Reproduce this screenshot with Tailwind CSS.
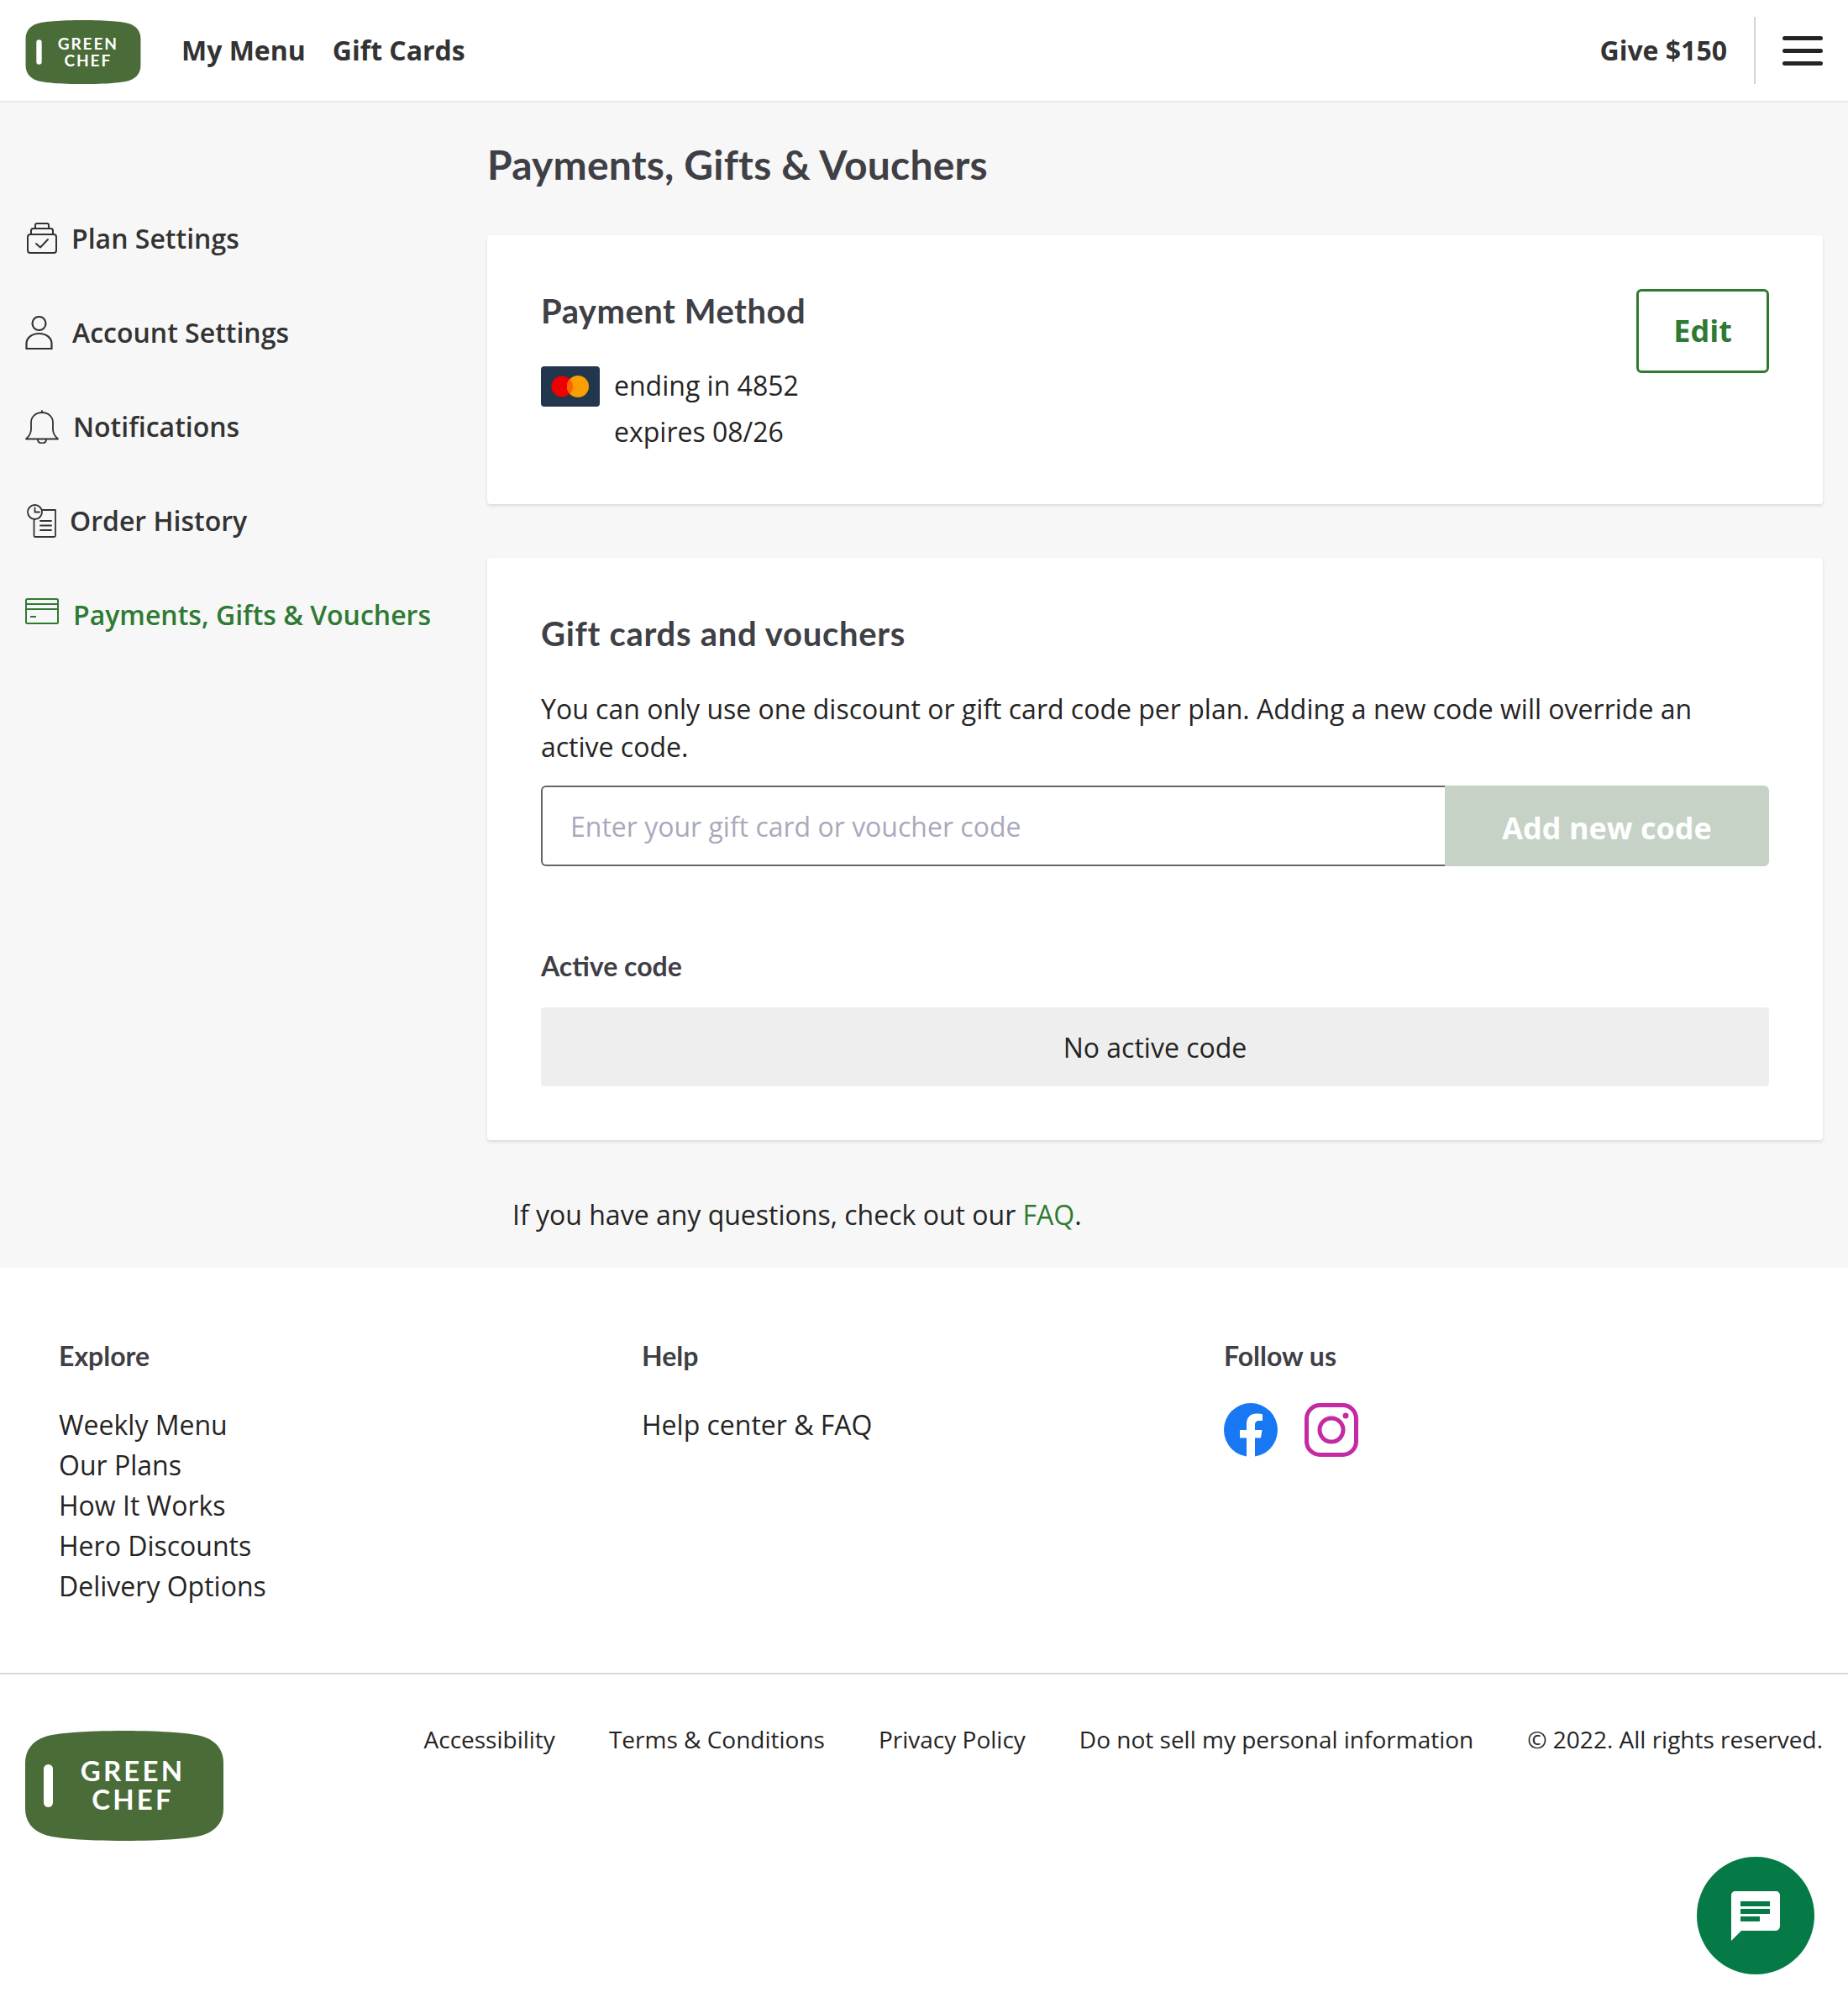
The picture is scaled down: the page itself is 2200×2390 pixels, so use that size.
<!DOCTYPE html>
<html lang="en">
<head>
  <meta charset="UTF-8" />
  <title>Payments, Gifts &amp; Vouchers</title>
  <script src="https://cdn.jsdelivr.net/npm/@tailwindcss/browser@4"></script>
</head>
<body class="bg-white font-['Open_Sans',sans-serif] text-[#242424]">
  <div class="relative w-[2200px] h-[2390px] overflow-hidden">

    <!-- header -->
    <header class="h-[122px] flex items-center border-b-2 border-[#e9e9e9] bg-white pl-[30px] pr-[30px]">
      <svg class="w-[138px] h-[76px] mt-[3px]" viewBox="0 0 236 131">
        <path fill="#4a6c38" d="M118 0C165 0 200 3 212 7C228 12 236 24 236 38V93C236 107 228 119 212 124C200 128 165 131 118 131C71 131 36 128 24 124C8 119 0 107 0 93V38C0 24 8 12 24 7C36 3 71 0 118 0Z"/>
        <rect x="22" y="40" width="11" height="51" rx="5.5" fill="#fff"/>
        <text x="128" y="60" text-anchor="middle" fill="#fff" font-family="Lato" font-weight="700" font-size="33" letter-spacing="3.2">GREEN</text>
        <text x="128" y="94" text-anchor="middle" fill="#fff" font-family="Lato" font-weight="700" font-size="33" letter-spacing="3.2">CHEF</text>
      </svg>
      <nav class="flex gap-[32px] ml-[48px] text-[32px] font-bold text-[#333]">
        <a>My Menu</a>
        <a>Gift Cards</a>
      </nav>
      <a class="ml-auto text-[32px] font-bold text-[#333]">Give $150</a>
      <div class="w-[2px] h-[80px] bg-[#d4d4d4] ml-[32px]"></div>
      <div class="ml-[32px] w-[48px] flex flex-col gap-[10px]">
        <div class="h-[5px] rounded-full bg-[#242424]"></div>
        <div class="h-[5px] rounded-full bg-[#242424]"></div>
        <div class="h-[5px] rounded-full bg-[#242424]"></div>
      </div>
    </header>

    <!-- account area -->
    <div class="flex h-[1387px] bg-[#f7f7f7]">
      <aside class="w-[580px] shrink-0 pl-[30px] pt-[140px] text-[32px] font-semibold text-[#333]">
        <a class="h-[112px] flex items-start gap-[17px]">
          <svg class="w-[36px] h-[37px] ml-[2px] mt-[3px] shrink-0" viewBox="0 0 36 37" fill="none" stroke="#333" stroke-width="2" stroke-linejoin="round" stroke-linecap="round">
            <rect x="1" y="14" width="34" height="22" rx="3"/>
            <path d="M5 14V9.500C5 8 6 7 7.500 7H28.500C30 7 31 8 31 9.500V14"/>
            <path d="M10 7V3C10 2 11 1 12 1H24C25 1 26 2 26 3V7"/>
            <path d="M11 25L16 29.500L25 20"/>
          </svg>
          <span class="leading-[44px]">Plan Settings</span>
        </a>
        <a class="h-[112px] flex items-start gap-[23px]">
          <svg class="w-[33px] h-[40px] mt-[2px] shrink-0" viewBox="0 0 33 40" fill="none" stroke="#333" stroke-width="2.200">
            <circle cx="16.500" cy="9" r="8"/>
            <path d="M1.500 39H31.500V33C31.500 26 25 21 16.500 21C8 21 1.500 26 1.500 33Z" stroke-linejoin="round"/>
          </svg>
          <span class="leading-[44px]">Account Settings</span>
        </a>
        <a class="h-[112px] flex items-start gap-[17px]">
          <svg class="w-[40px] h-[40px] mt-[2px] shrink-0" viewBox="0 0 40 40" fill="none" stroke="#333" stroke-width="1.800" stroke-linejoin="round" stroke-linecap="round">
            <path d="M1 34.500C5 31 7 28 7 23V15C7 8 12.500 3 20 3C27.500 3 33 8 33 15V23C33 28 35 31 39 34.500Z"/>
            <path d="M20 3V1"/>
            <path d="M15 35C15 38 17 39.500 20 39.500C23 39.500 25 38 25 35"/>
          </svg>
          <span class="leading-[44px]">Notifications</span>
        </a>
        <a class="h-[112px] flex items-start gap-[16px]">
          <svg class="w-[35px] h-[40px] ml-[2px] mt-[2px] shrink-0" viewBox="0 0 35 40" fill="none" stroke="#333" stroke-width="1.800" stroke-linecap="round" stroke-linejoin="round">
            <circle cx="9.500" cy="9.500" r="8.500"/>
            <path d="M9.500 4.500V9.500H15"/>
            <path d="M18 7H34V37.500C34 38.500 33.500 39 32.500 39H10C9 39 8.500 38.500 8.500 37.500V18.500"/>
            <path d="M16 20H29M16 25.500H29M16 31H29"/>
          </svg>
          <span class="leading-[44px]">Order History</span>
        </a>
        <a class="h-[112px] flex items-start gap-[17px] text-[#2f7a33]">
          <svg class="w-[40px] h-[31px] mt-[2px] shrink-0" viewBox="0 0 40 31" fill="none" stroke="#2f7a33" stroke-width="2" stroke-linejoin="round">
            <rect x="1" y="1" width="38" height="29" rx="1.500"/>
            <path d="M1 7H39M1 13H39"/>
            <path d="M6 22H13"/>
          </svg>
          <span class="leading-[44px]">Payments, Gifts &amp; Vouchers</span>
        </a>
      </aside>

      <main class="flex-1 pr-[30px]">
        <h1 class="pt-[44px] mb-[54px] font-['Lato',sans-serif] font-bold text-[48px] tracking-[0.2px] leading-[60px] text-[#3f3f46]">Payments, Gifts &amp; Vouchers</h1>

        <section class="flex justify-between bg-white rounded-[4px] shadow-[0_2px_4px_rgba(0,0,0,0.12)] px-[64px] pt-[64px] pb-[59px]">
          <div>
            <h2 class="font-['Lato',sans-serif] font-bold text-[40px] tracking-[0.5px] leading-[52px] text-[#3f3f46]">Payment Method</h2>
            <div class="flex mt-[35px] text-[32px] leading-[55px]">
              <svg class="w-[70px] h-[48px] mt-[5px] rounded-[4px]" viewBox="0 0 70 48">
                <rect width="70" height="48" fill="#22364d"/>
                <circle cx="25" cy="24" r="12.500" fill="#ee0000"/>
                <circle cx="44" cy="24" r="13" fill="#f9a000"/>
                <path d="M34.500 15.200A12.500 12.500 0 0 1 34.500 32.800A13 13 0 0 1 34.500 15.200Z" fill="#ff6000"/>
              </svg>
              <div class="ml-[17px]">
                <p>ending in 4852</p>
                <p>expires 08/26</p>
              </div>
            </div>
          </div>
          <button class="w-[158px] h-[100px] border-[3px] border-[#2f7a33] rounded-[6px] bg-white text-[36px] font-bold text-[#2f7a33]">Edit</button>
        </section>

        <section class="mt-[64px] bg-white rounded-[4px] shadow-[0_2px_4px_rgba(0,0,0,0.12)] px-[64px] pt-[63px] pb-[64px]">
          <h2 class="font-['Lato',sans-serif] font-bold text-[40px] tracking-[0.7px] leading-[54px] text-[#3f3f46]">Gift cards and vouchers</h2>
          <p class="mt-[40px] text-[32px] leading-[45px]">You can only use one discount or gift card code per plan. Adding a new code will override an active code.</p>
          <div class="flex mt-[24px] h-[96px]">
            <div class="flex-1 flex items-center pl-[33px] pt-[2px] border-2 border-r-0 border-[#666] rounded-l-[6px] text-[32px] text-[#a9a9bc]">Enter your gift card or voucher code</div>
            <button class="w-[386px] pt-[5px] bg-[#c6d2c6] rounded-r-[6px] text-[36px] font-bold text-white">Add new code</button>
          </div>
          <h3 class="mt-[99px] font-['Lato',sans-serif] font-bold text-[32px] leading-[40px] text-[#3f3f46]">Active code</h3>
          <div class="mt-[29px] h-[94px] pt-[1px] flex items-center justify-center bg-[#eee] rounded-[4px] text-[32px]">No active code</div>
        </section>

        <p class="mt-[67px] pl-[30px] text-[32px] leading-[44px]">If you have any questions, check out our <a class="text-[#2f7a33]">FAQ</a>.</p>
      </main>
    </div>

    <!-- footer -->
    <footer class="bg-white">
      <div class="grid grid-cols-[694px_693px_1fr] pl-[70px] pt-[85px] pb-[79px] border-b-2 border-[#d9d9d9]">
        <div>
          <h4 class="font-['Lato',sans-serif] font-bold text-[32px] leading-[40px] text-[#3f3f46]">Explore</h4>
          <ul class="mt-[38px] text-[32px] leading-[48px]">
            <li>Weekly Menu</li>
            <li>Our Plans</li>
            <li>How It Works</li>
            <li>Hero Discounts</li>
            <li>Delivery Options</li>
          </ul>
        </div>
        <div>
          <h4 class="font-['Lato',sans-serif] font-bold text-[32px] leading-[40px] text-[#3f3f46]">Help</h4>
          <ul class="mt-[38px] text-[32px] leading-[48px]">
            <li>Help center &amp; FAQ</li>
          </ul>
        </div>
        <div>
          <h4 class="font-['Lato',sans-serif] font-bold text-[32px] leading-[40px] text-[#3f3f46]">Follow us</h4>
          <div class="flex gap-[32px] mt-[36px]">
            <svg class="w-[64px] h-[64px]" viewBox="0 0 64 64">
              <circle cx="32" cy="32" r="32" fill="#1877f2"/>
              <path fill="#fff" d="M27 64V41.500H19V32H27V25C27 17 31.800 12.500 39 12.500C42.500 12.500 46 13.200 46 13.200V21H42C38 21 37 23.500 37 26V32H45.500L44 41.500H37V64Q32 64.500 27 64Z"/>
            </svg>
            <svg class="w-[64px] h-[64px]" viewBox="0 0 64 64" fill="none" stroke="#c32aa3" stroke-width="5">
              <rect x="2.500" y="2.500" width="59" height="59" rx="16"/>
              <circle cx="32" cy="32" r="14"/>
              <circle cx="49" cy="15" r="3.500" fill="#c32aa3" stroke="none"/>
            </svg>
          </div>
        </div>
      </div>

      <div class="flex items-start justify-between px-[30px] pt-[57px]">
        <svg class="w-[236px] h-[131px] mt-[10px]" viewBox="0 0 236 131">
          <path fill="#4a6c38" d="M118 0C165 0 200 3 212 7C228 12 236 24 236 38V93C236 107 228 119 212 124C200 128 165 131 118 131C71 131 36 128 24 124C8 119 0 107 0 93V38C0 24 8 12 24 7C36 3 71 0 118 0Z"/>
          <rect x="22" y="40" width="11" height="51" rx="5.500" fill="#fff"/>
          <text x="128" y="60" text-anchor="middle" fill="#fff" font-family="Lato" font-weight="700" font-size="33" letter-spacing="3.200">GREEN</text>
          <text x="128" y="94" text-anchor="middle" fill="#fff" font-family="Lato" font-weight="700" font-size="33" letter-spacing="3.200">CHEF</text>
        </svg>
        <div class="flex gap-[64px] text-[28px] leading-[40px]">
          <a>Accessibility</a>
          <a>Terms &amp; Conditions</a>
          <a>Privacy Policy</a>
          <a>Do not sell my personal information</a>
          <span>© 2022. All rights reserved.</span>
        </div>
      </div>
    </footer>

    <!-- chat bubble -->
    <button class="absolute left-[2020px] top-[2210px] w-[140px] h-[140px] rounded-full bg-[#057a46] flex items-center justify-center">
      <svg class="w-[60px] h-[60px]" viewBox="0 0 60 60">
        <path fill="#fff" d="M6 1H54C57 1 59 3 59 6V42C59 45 57 48 54 48H13L1 60V6C1 3 3 1 6 1Z"/>
        <path fill="#057a46" d="M12 13H47V19H12ZM12 22H47V28H12ZM12 31H35V37H12Z"/>
      </svg>
    </button>
  </div>
</body>
</html>
